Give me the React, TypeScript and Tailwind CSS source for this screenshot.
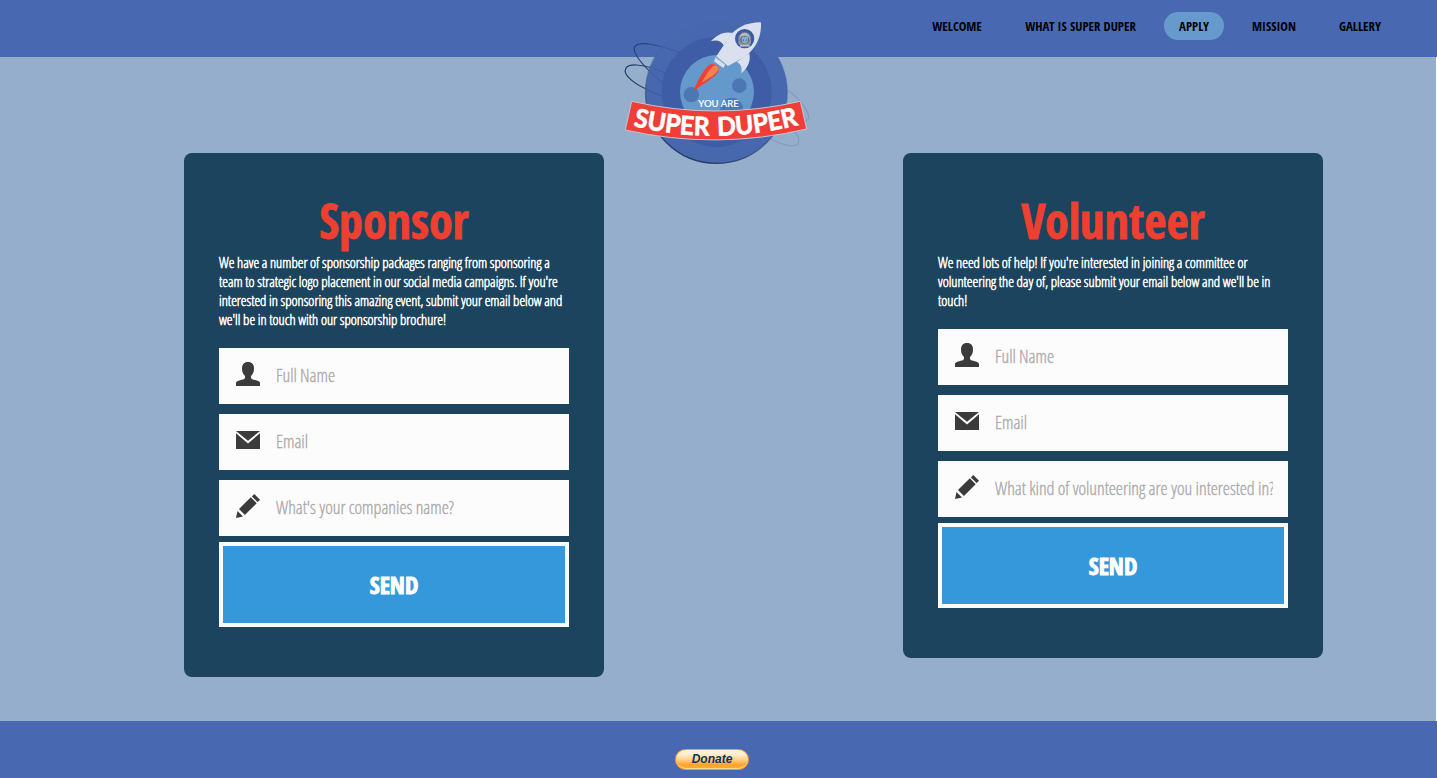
import React from "react";

const NAV = [
  { label: "WELCOME", width: "w-[80px]" },
  { label: "WHAT IS SUPER DUPER", width: "w-[141px]" },
  { label: "APPLY", width: "w-[60px]", active: true },
  { label: "MISSION", width: "w-[74px]" },
  { label: "GALLERY", width: "w-[72px]" },
];

function Logo() {
  return (
    <svg viewBox="0 0 600 480" className="block h-[160px] w-[200px]">
      <defs>
        <linearGradient id="ring" x1="0" y1="0" x2="0" y2="1">
          <stop offset="0" stopColor="#4768af" />
          <stop offset="1" stopColor="#4768ad" />
        </linearGradient>
        <linearGradient id="ringEdge" x1="0.6" y1="0.2" x2="0.3" y2="1">
          <stop offset="0" stopColor="#4869b1" stopOpacity="0.1" />
          <stop offset="1" stopColor="#1d3462" />
        </linearGradient>
        <linearGradient id="orbit" gradientUnits="userSpaceOnUse" x1="30" y1="0" x2="580" y2="0">
          <stop offset="0" stopColor="#1f3965" />
          <stop offset="0.3" stopColor="#3c5a98" />
          <stop offset="0.8" stopColor="#7189b5" stopOpacity="0.5" />
          <stop offset="1" stopColor="#6c87ae" stopOpacity="0.5" />
        </linearGradient>
        <path id="nameArc" d="M54 348 Q303 408 556 343" />
      </defs>
      <g fill="none" stroke="url(#orbit)" strokeWidth="3.500">
        <path d="M105 185 C75 155 50 122 60 109 C75 92 130 105 175 122" />
        <path d="M95 238 C45 215 25 190 32 176 C40 158 85 165 112 174" />
        <path d="M462 385 C510 410 545 414 551 397 C555 384 540 364 524 350" />
        <path d="M518 240 C560 270 585 310 580 325 C576 336 565 335 556 334" />
      </g>
      <circle cx="304.500" cy="247" r="213" fill="url(#ring)" stroke="url(#ringEdge)" strokeWidth="4" />
      <g fill="none" stroke="#3a5797" strokeWidth="2.500" opacity="0.8">
        <path d="M112 174 C155 187 185 208 205 225" />
        <path d="M138 110 C175 120 200 130 225 142" />
        <path d="M105 185 C125 205 155 230 180 245" />
        <path d="M95 238 C125 252 155 264 195 276" />
      </g>
      <circle cx="305" cy="246" r="165" fill="#3f5ca6" />
      <circle cx="306" cy="246" r="111" fill="#6699cb" />
      <circle cx="229" cy="254" r="23" fill="#4d76b5" />
      <circle cx="373" cy="227" r="22" fill="#4d76b5" />
      <circle cx="350" cy="297" r="34" fill="#4d76b5" />
      <path d="M236 242 C247 215 265 180 282 166 C292 160 306 163 310 171 C314 181 306 193 296 200 C275 216 252 230 236 242Z" fill="#ee4037" />
      <path d="M258 220 C270 192 282 176 292 168 C303 162 312 170 310 178 C306 192 281 205 258 220Z" fill="#f5814f" />
      <path d="M236 242 C247 215 265 180 282 166 C288 162 294 162 300 164 C283 175 270 200 258 222Z" fill="#ee4037" />
      <path d="M353 69 C325 62 303 77 288 93 C306 89 319 92 326 106Z" fill="#dbe0ee" />
      <path d="M403 129 C409 158 393 178 379 190 C382 172 378 162 365 155Z" fill="#dbe0ee" />
      <path d="M438 37 C396 37 366 52 345 77 L304 139 L339 168 L392 139 C425 112 440 78 438 37Z" fill="#dbe0ee" />
      <path d="M302 141 L331 163 L325 174 L297 154Z" fill="#dbe0ee" />
      <path d="M302 142 L333 165" stroke="#6699cb" strokeWidth="2" />
      <circle cx="389" cy="86" r="29" fill="#3d5ba5" />
      <rect x="370" y="76" width="38" height="29" rx="8" fill="#8e959f" />
      <circle cx="389" cy="84" r="17" fill="#b7bac0" stroke="#737b89" strokeWidth="3" />
      <ellipse cx="389" cy="88" rx="13" ry="11" fill="#4b5565" />
      <path d="M379 86 Q382 76 390 80 Q399 76 400 86 L398 96 Q390 104 381 96Z" fill="#82add4" />
      <circle cx="385" cy="90" r="1.700" fill="#24406f" />
      <circle cx="394" cy="90" r="1.700" fill="#24406f" />
      <path d="M375 107 H404" stroke="#c3c4c8" strokeWidth="5" />
      <text x="250" y="290" textLength="121" lengthAdjust="spacingAndGlyphs" fill="#ffffff" stroke="#ffffff" strokeWidth="0.600" className="font-['Lato'] text-[28px]">YOU ARE</text>
      <path d="M50 274 Q303 332 556 274 L575 357 Q303 421 31 360Z" fill="#ef3e38" stroke="#c9c4cc" strokeWidth="3" />
      <text fill="#ffffff" stroke="#ffffff" strokeWidth="2" className="font-['Lato'] text-[77px] font-bold [word-spacing:7px]">
        <textPath href="#nameArc" textLength="502" lengthAdjust="spacingAndGlyphs">SUPER DUPER</textPath>
      </text>
    </svg>
  );
}

function UserIcon() {
  return (
    <svg viewBox="0 0 24 24" className="size-6 fill-[#3b3b3b]">
      <path d="M12 0C8 0 6 2.600 6 6.500C6 9.800 7.100 12 8.600 13.500C9.400 14.500 9.200 16.500 7.900 17.200C5.500 18.100 0 18.500 0 21V24H24V21C24 18.500 18.500 18.100 16.100 17.200C14.800 16.500 14.600 14.500 15.400 13.500C16.900 12 18 9.800 18 6.500C18 2.600 16 0 12 0Z" />
    </svg>
  );
}

function MailIcon() {
  return (
    <svg viewBox="0 0 24 24" className="size-6 fill-[#3b3b3b]">
      <path d="M0 3H24L12 12.700Z" />
      <path d="M0 5.200L12 15.500L24 5.200V21H0Z" />
    </svg>
  );
}

function PencilIcon() {
  return (
    <svg viewBox="0 0 24 24" className="size-6 fill-[#3b3b3b]">
      <path d="M18.300 0L24 5.700L21.600 8.100L15.900 2.400Z" />
      <path d="M14.800 3.300L20.700 9.200L8.900 21L3 15.100Z" />
      <path d="M1.500 17L7 22.500L0 24Z" />
    </svg>
  );
}

function Field({ icon, placeholder }: { icon: React.ReactNode; placeholder: string }) {
  return (
    <label className="flex h-14 items-center bg-[#fcfcfc] pl-[17px]">
      <span className="-mt-1 shrink-0">{icon}</span>
      <input
        placeholder={placeholder}
        className="-mt-0.5 ml-4 h-full w-[278px] bg-transparent font-['Open_Sans',sans-serif] text-[18px] font-light tracking-[-0.01px] outline-none [-webkit-text-stroke:0.3px_#a9a9a9] placeholder:text-[#a9a9a9]"
      />
    </label>
  );
}

function Card({ title, lines, question }: { title: string; lines: string[]; question: string }) {
  return (
    <section className="w-[420px] rounded-lg bg-[#1c445e] px-[35px] pt-[35px] pb-[50px]">
      <h1 className="h-[65px] text-center text-[48px] leading-[65px] font-bold text-[#ee4031] [-webkit-text-stroke:0.8px_#ee4031]">{title}</h1>
      <p className="font-['Open_Sans',sans-serif] text-[14.4px] leading-[19px] font-light whitespace-nowrap text-white [-webkit-text-stroke:0.5px_white]">
        {lines.map((line) => (
          <span key={line} className="block">{line}</span>
        ))}
      </p>
      <form className="mt-[19px]" onSubmit={(e) => e.preventDefault()}>
        <div className="flex flex-col gap-[10px]">
          <Field icon={<UserIcon />} placeholder="Full Name" />
          <Field icon={<MailIcon />} placeholder="Email" />
          <Field icon={<PencilIcon />} placeholder={question} />
        </div>
        <button className="mt-[6px] block h-[85px] w-full border-4 border-[#fcfcfc] bg-[#3498db] text-[24px] font-bold text-white [-webkit-text-stroke:1px_white]">SEND</button>
      </form>
    </section>
  );
}

export default function App() {
  return (
    <div className="relative flex h-[778px] w-full flex-col overflow-hidden bg-white font-['Open_Sans_Condensed','Open_Sans',sans-serif] font-stretch-75%">
      <header className="flex h-[57px] shrink-0 justify-end bg-[#4869b1] pt-3 pr-[41px]">
        <nav className="flex h-7 gap-[13px]">
          {NAV.map((item) => (
            <a
              key={item.label}
              className={`flex h-7 items-center justify-center rounded-full pt-px text-[12.8px] font-bold whitespace-nowrap text-black ${item.width} ${item.active ? "bg-[#6699cc]" : ""}`}
            >
              {item.label}
            </a>
          ))}
        </nav>
      </header>
      <main className="mr-px flex h-[664px] shrink-0 items-start gap-[299px] bg-[#94aecb] pt-24 pl-[184px]">
        <Card
          title="Sponsor"
          lines={[
            "We have a number of sponsorship packages ranging from sponsoring a",
            "team to strategic logo placement in our social media campaigns. If you're",
            "interested in sponsoring this amazing event, submit your email below and",
            "we'll be in touch with our sponsorship brochure!",
          ]}
          question="What's your companies name?"
        />
        <Card
          title="Volunteer"
          lines={[
            "We need lots of help! If you're interested in joining a committee or",
            "volunteering the day of, please submit your email below and we'll be in",
            "touch!",
          ]}
          question="What kind of volunteering are you interested in?"
        />
      </main>
      <footer className="flex h-[57px] shrink-0 items-start justify-center bg-[#4869b1] pt-7 pr-[13px]">
        <button className="h-[21px] w-[74px] rounded-full border border-[#ff9933] bg-linear-to-b from-[#fff0d5] from-20% via-[#ffd289] via-50% to-[#ffa52b] to-75% font-['Liberation_Sans'] text-[12px] leading-[17px] font-bold text-[#0f3259] italic shadow-[inset_0_-1px_1px_#ffdf9c] font-stretch-100%">
          Donate
        </button>
      </footer>
      <div className="absolute top-[10px] left-[615px]">
        <Logo />
      </div>
    </div>
  );
}
